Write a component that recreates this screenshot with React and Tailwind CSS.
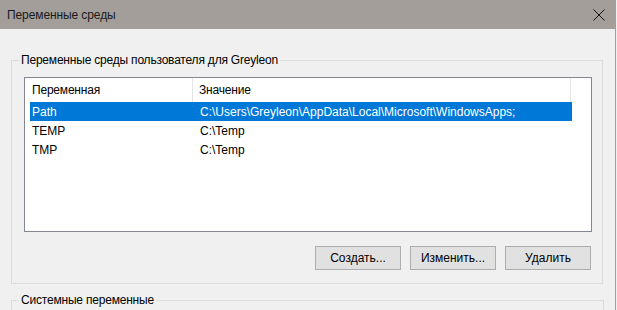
import React from "react";

const rows = [
  { name: "Path", value: "C:\\Users\\Greyleon\\AppData\\Local\\Microsoft\\WindowsApps;", selected: true },
  { name: "TEMP", value: "C:\\Temp" },
  { name: "TMP", value: "C:\\Temp" },
];

function Button({ children }) {
  return (
    <button className="w-[86px] h-[24px] bg-[#e1e1e1] border border-[#adadad] text-[12px] leading-none text-black">
      {children}
    </button>
  );
}

export default function App() {
  return (
    <div className="w-[617px] h-[310px] overflow-hidden bg-[#f0f0f0] font-['Liberation_Sans',sans-serif] text-[12px] text-black">
      <div className="w-[616px] h-full border-r border-[#9e9e9e] flex flex-col">
        <div className="h-[29px] shrink-0 bg-[#a39e9a] flex items-center justify-between pl-[7px] pr-[10px]">
          <span className="text-[12px] text-[#1a1a1a] tracking-[-0.1px]">Переменные среды</span>
          <svg width="12" height="12" viewBox="0 0 12 12" className="mt-[1px]">
            <path d="M0.5 0.5L11.5 11.5M11.5 0.5L0.5 11.5" stroke="#111" strokeWidth="1" />
          </svg>
        </div>

        <fieldset className="ml-[11px] mt-[23px] w-[592px] border border-[#dcdcdc] pl-[7px] pb-[13px]">
          <legend className="px-[2px] leading-[16px] tracking-[-0.2px]">Переменные среды пользователя для Greyleon</legend>
          <div className="ml-[5px] mt-[9px] w-[568px] h-[155px] bg-white border border-[#828790] flex flex-col">
            <div className="flex h-[24px] shrink-0">
              <div className="w-[168px] pl-[7px] flex items-center border-r border-[#e5e5e5] tracking-[-0.2px]">Переменная</div>
              <div className="w-[378px] pl-[6px] flex items-center border-r border-[#e5e5e5] tracking-[-0.2px]">Значение</div>
            </div>
            {rows.map((r) => (
              <div
                key={r.name}
                className={
                  r.selected
                    ? "ml-[5px] w-[542px] h-[19px] flex items-center bg-[#0078d7] text-white"
                    : "ml-[5px] w-[542px] h-[19px] flex items-center"
                }
              >
                <div className="w-[170px] pl-[2px]">{r.name}</div>
                <div>{r.value}</div>
              </div>
            ))}
          </div>
          <div className="ml-[5px] mt-[14px] w-[568px] flex justify-end gap-[9px] pr-[1px]">
            <Button>Создать...</Button>
            <Button>Изменить...</Button>
            <Button>Удалить</Button>
          </div>
        </fieldset>

        <fieldset className="ml-[11px] mt-[8px] w-[593px] h-[60px] border border-[#dcdcdc] pl-[7px] shrink-0">
          <legend className="px-[2px] leading-[16px] tracking-[-0.2px]">Системные переменные</legend>
        </fieldset>
      </div>
    </div>
  );
}
